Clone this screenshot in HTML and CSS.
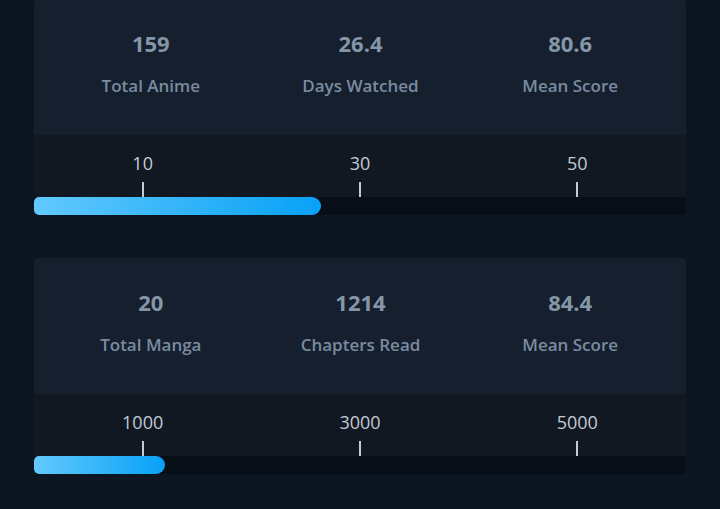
FILE: index.html
```html
<!DOCTYPE html>
<html lang="en">
<head>
<meta charset="utf-8">
<title>Stats</title>
<link rel="stylesheet" href="styles.css">
</head>
<body>
<main class="page">
  <section class="card">
    <div class="stats">
      <div class="stat"><div class="value">159</div><div class="label">Total Anime</div></div>
      <div class="stat"><div class="value">26.4</div><div class="label">Days Watched</div></div>
      <div class="stat"><div class="value">80.6</div><div class="label">Mean Score</div></div>
    </div>
    <div class="ticks">
      <div class="tick"><span class="tick-label">10</span><span class="tick-line"></span></div>
      <div class="tick"><span class="tick-label">30</span><span class="tick-line"></span></div>
      <div class="tick"><span class="tick-label">50</span><span class="tick-line"></span></div>
    </div>
    <div class="track"><div class="fill" style="width:44%"></div></div>
  </section>
  <section class="card">
    <div class="stats">
      <div class="stat"><div class="value">20</div><div class="label">Total Manga</div></div>
      <div class="stat"><div class="value">1214</div><div class="label">Chapters Read</div></div>
      <div class="stat"><div class="value">84.4</div><div class="label">Mean Score</div></div>
    </div>
    <div class="ticks">
      <div class="tick"><span class="tick-label">1000</span><span class="tick-line"></span></div>
      <div class="tick"><span class="tick-label">3000</span><span class="tick-line"></span></div>
      <div class="tick"><span class="tick-label">5000</span><span class="tick-line"></span></div>
    </div>
    <div class="track"><div class="fill" style="width:20.1%"></div></div>
  </section>
</main>
</body>
</html>
```

FILE: styles.css
```css
html, body {
  margin: 0;
  padding: 0;
  background: #0b1622;
  height: 100%;
  overflow: hidden;
}
body {
  font-family: "Open Sans", "Liberation Sans", sans-serif;
}
.page {
  display: flex;
  flex-direction: column;
  gap: 43px;
  padding: 0 34px;
  margin-top: -1px;
}
.card {
  border-radius: 4px;
  overflow: hidden;
  background: #111822;
}
.stats {
  background: #151f2e;
  height: 136px;
  box-sizing: border-box;
  padding: 30px 11px 0 12px;
  display: grid;
  grid-template-columns: repeat(3, 1fr);
}
.stat {
  display: flex;
  flex-direction: column;
  align-items: center;
}
.value {
  font-size: 22px;
  line-height: 28px;
  font-weight: 700;
  color: #8596a8;
}
.label {
  margin-top: 17px;
  font-size: 17px;
  line-height: 24px;
  font-weight: 600;
  color: #7a8ba0;
}
.ticks {
  height: 62px;
  box-sizing: border-box;
  padding-top: 17px;
  display: grid;
  grid-template-columns: repeat(3, 1fr);
}
.tick {
  display: flex;
  flex-direction: column;
  align-items: center;
}
.tick-label {
  font-size: 18px;
  line-height: 22px;
  color: #c3cad4;
}
.tick-line {
  margin-top: auto;
  width: 2px;
  height: 15px;
  background: #c3cad4;
}
.track {
  height: 18px;
  background: #080e16;
}
.fill {
  height: 100%;
  border-radius: 5px 9px 9px 5px;
  background: linear-gradient(90deg, #62c9fd, #08a1f7);
}
```
